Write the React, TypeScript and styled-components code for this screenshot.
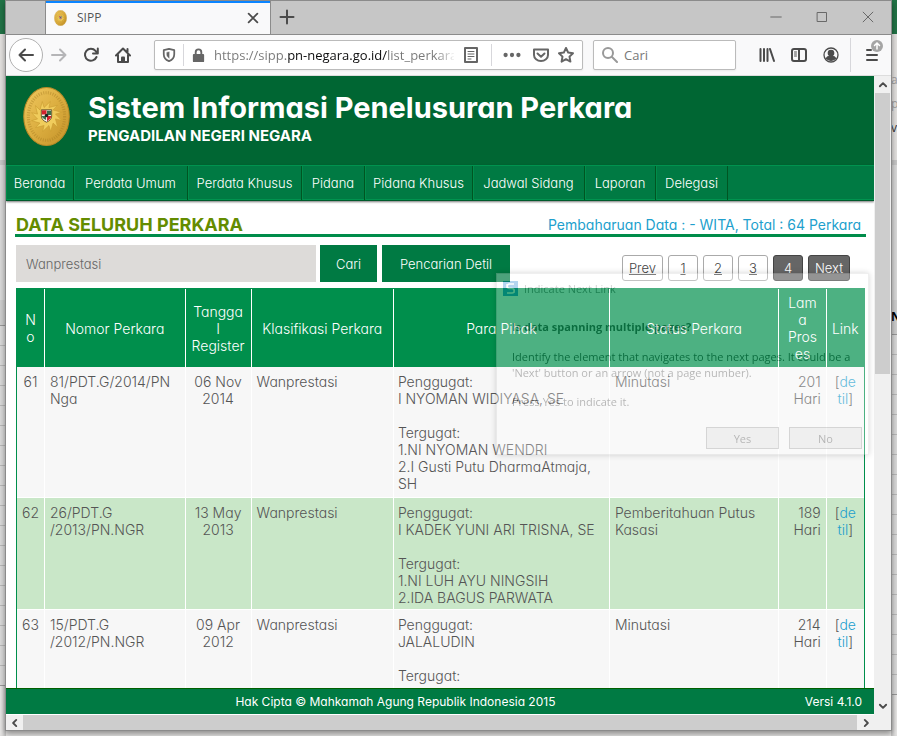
import React from "react";
import styled, { createGlobalStyle } from "styled-components";

const GlobalStyle = createGlobalStyle`
  * { box-sizing: border-box; }
  body { margin: 0; background: #e6e6e6; }
  button, input { font-family: inherit; font-weight: inherit; margin: 0; border: 0; padding: 0; }
`;

const gothic = `Inter, "Liberation Sans", sans-serif`;
const system = `"Open Sans", "Noto Sans", sans-serif`;

const Desktop = styled.div`
  display: grid;
  grid-template: 100vh / 100%;
  overflow: hidden;
`;

/* Spreadsheet window behind the browser */
const Backdrop = styled.div`
  grid-area: 1 / 1;
  display: flex;
  justify-content: space-between;
  background: #e9e8e7;
  font-family: ${system};
`;
const Edge = styled.div<{ $side: "left" | "right" }>`
  width: 6px;
  overflow: hidden;
  display: flex;
  flex-direction: column;
  box-shadow: inset ${(p) => (p.$side === "left" ? "-4px" : "4px")} 0 4px -2px #0003;
`;
const EdgeTitle = styled.div`
  flex: 0 0 34px;
  background: #217346;
`;
const EdgeRibbon = styled.div`
  flex: 0 0 126px;
  padding-top: 34px;
  background: #e4e2e0;
  font-size: 12px;
  line-height: 24px;
  color: #a0a0a0;
`;
const EdgeDark = styled.div`
  color: #333;
`;
const EdgeFormula = styled.div`
  flex: 0 0 140px;
  border-top: 5px solid #c8c8c8;
  background: #dadada;
`;
const EdgeHeading = styled.div`
  flex: 0 0 26px;
  font: bold 12px/34px ${system};
  background: #cfcfcf;
  border-bottom: 1px solid #999;
`;
const EdgeCells = styled.div`
  flex: 0 0 360px;
  background: repeating-linear-gradient(#dadada 0 19px, #b9b9b9 19px 20px);
  border-bottom: 1px solid #999;
`;

const Browser = styled.div`
  grid-area: 1 / 1;
  position: relative;
  margin: 0 5px 5px;
  border: 1px solid #8b8b8b;
  display: flex;
  flex-direction: column;
  min-width: 0;
  min-height: 0;
  background: #fff;
  box-shadow: 0 3px 6px #0006;
  font-family: ${system};
`;

const TabStrip = styled.div`
  flex: 0 0 33px;
  display: flex;
  background: #c6c6c6;
  border-bottom: 1px solid #8b8b8b;
`;
const Tab = styled.div`
  width: 226px;
  height: 33px;
  margin-left: 39px;
  padding: 0 10px 0 8px;
  display: flex;
  align-items: center;
  gap: 10px;
  background: #f9f9fa;
  border: solid #8b8b8b;
  border-width: 0 1px;
  box-shadow: inset 0 2px #0a84ff;
  font-size: 12px;
  color: #555;
`;
const TabLabel = styled.span`
  flex: 1;
`;
const IconButton = styled.button<{ $w?: number; $h?: number; $tone?: string }>`
  flex: 0 0 ${(p) => p.$w ?? 32}px;
  height: ${(p) => p.$h ?? 32}px;
  display: flex;
  align-items: center;
  justify-content: center;
  background: none;
  color: ${(p) => p.$tone ?? "#4b4b4b"};
`;
const WindowButtons = styled.div`
  display: flex;
  margin-left: auto;
`;

const Toolbar = styled.div`
  flex: 0 0 41px;
  height: 41px;
  display: flex;
  align-items: center;
  padding: 0 0 1px 3px;
  background: #f9f9fa;
  box-shadow: inset 0 -1px #ddd;
`;
const BackButton = styled(IconButton)`
  border: 1px solid #b1b1b1;
  border-radius: 50%;
  background: #fff;
`;
const Field = styled.div`
  height: 30px;
  display: flex;
  align-items: center;
  background: #fff;
  border: 1px solid #bbb;
  border-radius: 2px;
  box-shadow: 0 1px 2px #0001;
`;
const UrlField = styled(Field)`
  flex: 1;
  min-width: 0;
  margin: 0 10px 0 15px;
`;
const SearchField = styled(Field)`
  flex: 0 0 143px;
  min-width: 0;
  margin-right: 15px;
  padding-left: 8px;
  gap: 6px;
`;
const Rule = styled.i<{ $h: number; $gap?: number }>`
  flex: 0 0 1px;
  height: ${(p) => p.$h}px;
  margin-left: ${(p) => p.$gap ?? 0}px;
  background: #d7d7db;
`;
const UrlInput = styled.input`
  flex: 1;
  min-width: 0;
  height: 24px;
  margin-left: 2px;
  font-size: 13px;
  color: transparent;
  background: linear-gradient(90deg, #777 73px, #0c0c0d 73px 173px, #777 173px 222px, #7770 242px);
  background-clip: text;
  -webkit-background-clip: text;
  outline: 0;
`;
const SearchInput = styled.input`
  flex: 1;
  min-width: 0;
  font-size: 13px;
  background: none;
  outline: 0;
  &::placeholder { color: #777; opacity: 1; }
`;

const View = styled.div`
  flex: 1;
  min-height: 0;
  display: flex;
`;
const ViewColumn = styled.div`
  flex: 1;
  min-width: 0;
  display: flex;
  flex-direction: column;
`;
const Page = styled.div`
  flex: 1;
  min-height: 0;
  overflow: hidden;
  font-family: ${gothic};
  font-feature-settings: "cv11";
  font-size: 13px;
  font-weight: 300;
  color: #555;
`;
const VBar = styled.div`
  flex: 0 0 17px;
  display: flex;
  flex-direction: column;
  align-items: center;
  padding-bottom: 16px;
  background: #f0f0f0;
`;
const VThumb = styled.div`
  flex: 0 0 44%;
  width: 15px;
  background: #cdcdcd;
`;
const Spacer = styled.div`
  flex: 1;
`;
const HBar = styled.div`
  flex: 0 0 16px;
  display: flex;
  align-items: center;
  background: #f0f0f0;
  border-top: 1px solid #fff;
`;
const HThumb = styled.div`
  flex: 1;
  height: 15px;
  background: #cdcdcd;
`;

const Banner = styled.header`
  height: 89px;
  display: flex;
  gap: 18px;
  padding: 11px 17px;
  background: #006633;
  color: #fff;
`;
const SiteName = styled.h1`
  margin: 4px 0 0;
  font-size: 29px;
  line-height: 34px;
  font-weight: 700;
  white-space: nowrap;
`;
const CourtName = styled.h2`
  margin: 2px 0 0;
  font-size: 15px;
  line-height: 18px;
  font-weight: 700;
`;
const Menu = styled.nav`
  height: 36px;
  display: flex;
  background: #007a43;
  border-top: 1px solid #00934f;
  border-bottom: 1px solid #005a2c;
  box-shadow: inset 0 -1px #00934f, 0 1px 2px #0008;
`;
const MenuLink = styled.a<{ $w: number }>`
  flex: 0 0 ${(p) => p.$w}px;
  display: flex;
  align-items: center;
  justify-content: center;
  color: #fff;
  text-decoration: none;
  white-space: nowrap;
  border-right: 1px solid #005522;
  box-shadow: inset 1px 0 #008c4b;
`;
const Main = styled.main`
  padding: 9px 8px 0 9px;
`;
const Heading = styled.div`
  height: 27px;
  display: flex;
  justify-content: space-between;
  align-items: flex-end;
  padding: 0 5px 0 1px;
  border-bottom: 3px solid #008c4a;
  line-height: 18px;
`;
const Title = styled.h3`
  margin: 0;
  font-size: 18px;
  line-height: 18px;
  font-weight: 700;
  color: #648c00;
`;
const Updated = styled.span`
  font-size: 14px;
  font-weight: 400;
  color: #219fcd;
`;
const Filters = styled.form`
  display: flex;
  align-items: flex-start;
  padding: 8px 16px 6px 1px;
`;
const Query = styled.input`
  flex: 0 1 300px;
  min-width: 0;
  height: 37px;
  padding: 0 10px;
  margin-right: 4px;
  background: #dddbd9;
  font-size: 13px;
  font-feature-settings: inherit;
  color: #666;
`;
const Submit = styled.button<{ $w: number }>`
  flex: 0 0 ${(p) => p.$w}px;
  height: 37px;
  margin-right: 5px;
  background: #007a43;
  color: #fff;
  font-size: 13px;
  font-feature-settings: inherit;
`;
const Pager = styled.div`
  display: flex;
  gap: 5px;
  margin: 10px 0 0 auto;
`;
const PageLink = styled.a<{ $w?: number; $dark?: boolean }>`
  width: ${(p) => p.$w ?? 30}px;
  height: 26px;
  display: flex;
  align-items: center;
  justify-content: center;
  border: 1px solid ${(p) => (p.$dark ? "#444" : "#aaa")};
  border-radius: 3px;
  background: ${(p) => (p.$dark ? "#666" : "#fff")};
  color: ${(p) => (p.$dark ? "#fff" : "#444")};
  text-decoration: ${(p) => (p.$dark ? "none" : "underline")};
`;

const CaseTable = styled.table`
  width: calc(100% - 2px);
  margin-left: 1px;
  table-layout: fixed;
  border-collapse: separate;
  border-spacing: 0;
  border: solid #008f4c;
  border-width: 1px 1px 0;
  font-size: 14px;
  line-height: 17px;
`;
const Th = styled.th`
  height: 78px;
  padding: 0;
  background: #008f4c;
  color: #fff;
  font-weight: inherit;
  white-space: pre-line;
  border-right: 1px solid #fff;
  &:last-child { border-right: 0; }
`;
const Row = styled.tr<{ $h: number; $alt: boolean }>`
  height: ${(p) => p.$h}px;
  background: ${(p) => (p.$alt ? "#c9e7c8" : "#f7f7f7")};
`;
const Td = styled.td<{ $align?: string; $pad?: number }>`
  padding: 6px ${(p) => p.$pad ?? 5}px 3px;
  vertical-align: top;
  text-align: ${(p) => p.$align ?? "left"};
  white-space: pre;
  border: solid #fff;
  border-width: 0 1px 1px 0;
  &:last-child { border-right: 0; }
`;
const Detail = styled.a`
  color: #219fcd;
  text-decoration: none;
`;
const Footer = styled.footer`
  flex: 0 0 26px;
  display: grid;
  grid-template-columns: 1fr auto;
  gap: 20px;
  align-items: center;
  padding-right: 12px;
  text-align: center;
  background: #007a43;
  border-top: 1px solid #006000;
  color: #fff;
  font: 12px ${gothic};
  font-feature-settings: "cv11";
`;

/* Prompt fading in over the page */
const Prompt = styled.div`
  position: absolute;
  top: 272px;
  right: 22px;
  width: 373px;
  height: 182px;
  padding: 5px 6px;
  display: flex;
  flex-direction: column;
  opacity: 0.3;
  background: #fff;
  border: 1px solid #ccc;
  box-shadow: 0 0 6px #0008;
  font-size: 11px;
  color: #222;
`;
const PromptTitle = styled.div`
  display: flex;
  gap: 6px;
  align-items: center;
  height: 18px;
  color: #666;
`;
const PromptText = styled.p<{ $gap: number }>`
  margin: ${(p) => p.$gap}px 0 0 9px;
  line-height: 16px;
  white-space: pre;
`;
const PromptActions = styled.div`
  display: flex;
  justify-content: flex-end;
  gap: 10px;
  margin-top: auto;
`;
const PromptButton = styled.button`
  width: 73px;
  height: 22px;
  background: #ddd;
  border: 1px solid #888;
  font-size: 11px;
  color: #222;
`;

const Ico = ({ children, s = 16, w = 2, fill = "none" }: { children: React.ReactNode; s?: number; w?: number; fill?: string }) => (
  <svg width={s} height={s} viewBox="0 0 16 16" fill={fill} stroke="currentColor" strokeWidth={w} strokeLinecap="round" strokeLinejoin="round">
    {children}
  </svg>
);

const rays = Array.from({ length: 24 }, (_, i) => {
  const a = (i * Math.PI) / 12;
  const r = i % 2 ? 9 : 15;
  return `${22.5 + r * Math.sin(a + (i % 2 ? 0 : 0.25))},${28.5 - r * Math.cos(a + (i % 2 ? 0 : 0.25))}`;
}).join(" ");

const Seal = ({ w, h }: { w: number; h: number }) => (
  <svg width={w} height={h} viewBox="0 0 45 57">
    <defs>
      <linearGradient id="gold" x1="0" y1="0" x2="1" y2="1">
        <stop offset="0" stopColor="#f0c860" />
        <stop offset="0.5" stopColor="#dcae40" />
        <stop offset="1" stopColor="#c39128" />
      </linearGradient>
    </defs>
    <ellipse cx="22.5" cy="28.5" rx="22" ry="28" fill="url(#gold)" stroke="#b98a26" />
    <ellipse cx="22.5" cy="28.5" rx="17.5" ry="23" fill="none" stroke="#a67c22" strokeWidth="3" strokeDasharray="1 1.3" opacity="0.45" />
    <polygon points={rays} fill="#f0cc5c" stroke="#c99c30" strokeWidth="0.6" />
    <path d="M17.500 22h10v6q0 4-5 6-5-2-5-6z" fill="#f4f0e4" stroke="#5a4517" strokeWidth="0.8" />
    <path d="M18 22.500h4.500v4H18zM23 28h4q0 3-4 5z" fill="#d3222c" />
    <path d="M23 23h4v4h-4zM18 28h4v4q-4-2-4-4z" fill="#3d6e4a" />
    <circle cx="22.500" cy="27.500" r="1.700" fill="#222" />
  </svg>
);

const menu: [string, number][] = [
  ["Beranda", 68], ["Perdata Umum", 114], ["Perdata Khusus", 114], ["Pidana", 63],
  ["Pidana Khusus", 108], ["Jadwal Sidang", 112], ["Laporan", 71], ["Delegasi", 72],
];
const columns: [string, string][] = [
  ["N\no", "3.3%"], ["Nomor Perkara", "16.6%"], ["Tangga\nl\nRegister", "7.8%"], ["Klasifikasi Perkara", "16.8%"],
  ["Para Pihak", "25.5%"], ["Status Perkara", "20%"], ["Lam\na\nPros\nes", "5.6%"], ["Link", "4.4%"],
];
const cases = [
  { no: "61", id: "81/PDT.G/2014/PN\nNga", date: "06 Nov\n2014", status: "Minutasi", days: "201\nHari", h: 131,
    parties: "Penggugat:\nI NYOMAN WIDIYASA, SE\n\nTergugat:\n1.NI NYOMAN WENDRI\n2.I Gusti Putu DharmaAtmaja,\nSH" },
  { no: "62", id: "26/PDT.G\n/2013/PN.NGR", date: "13 May\n2013", status: "Pemberitahuan Putus\nKasasi", days: "189\nHari", h: 112,
    parties: "Penggugat:\nI KADEK YUNI ARI TRISNA, SE\n\nTergugat:\n1.NI LUH AYU NINGSIH\n2.IDA BAGUS PARWATA" },
  { no: "63", id: "15/PDT.G\n/2012/PN.NGR", date: "09 Apr\n2012", status: "Minutasi", days: "214\nHari", h: 113,
    parties: "Penggugat:\nJALALUDIN\n\nTergugat:" },
];

export default function App() {
  return (
    <Desktop>
      <GlobalStyle />
      <Backdrop>
        <Edge $side="left">
          <EdgeTitle /><EdgeRibbon /><EdgeFormula /><EdgeHeading /><EdgeCells />
        </Edge>
        <Edge $side="right">
          <EdgeTitle />
          <EdgeRibbon>a<br />p<EdgeDark>va</EdgeDark></EdgeRibbon>
          <EdgeFormula />
          <EdgeHeading>N</EdgeHeading>
          <EdgeCells />
        </Edge>
      </Backdrop>
      <Browser>
        <TabStrip>
          <Tab>
            <Seal w={13} h={16} />
            <TabLabel>SIPP</TabLabel>
            <IconButton $w={14} aria-label="Close tab"><Ico s={14}><path d="M3 3l10 10M13 3L3 13" /></Ico></IconButton>
          </Tab>
          <IconButton aria-label="New tab"><Ico><path d="M8 1.500v13M1.500 8h13" /></Ico></IconButton>
          <WindowButtons>
            <IconButton $w={46} $tone="#666" aria-label="Minimize"><Ico s={12} w={1.3}><path d="M1 8h14" /></Ico></IconButton>
            <IconButton $w={46} $tone="#666" aria-label="Maximize"><Ico s={12} w={1.3}><path d="M2 2h12v12H2z" /></Ico></IconButton>
            <IconButton $w={46} $tone="#666" aria-label="Close window"><Ico s={12} w={1.3}><path d="M1.500 1.500l13 13M14.500 1.500l-13 13" /></Ico></IconButton>
          </WindowButtons>
        </TabStrip>
        <Toolbar>
          <BackButton $w={34} $h={34} aria-label="Back"><Ico><path d="M15 8H1.500M7 2.500L1.500 8 7 13.500" /></Ico></BackButton>
          <IconButton $tone="#b5b5b7" aria-label="Forward"><Ico><path d="M1 8h13.500M9 2.500L14.500 8 9 13.500" /></Ico></IconButton>
          <IconButton aria-label="Reload"><Ico><path d="M13.500 10a6 6 0 1 1-1-6.200L14.500 6M14.800 1.500V6.500H10" /></Ico></IconButton>
          <IconButton aria-label="Home"><Ico><path d="M1 8.500L8 1.500l7 7M3 8v7h10V8M12.500 2v3" /><path d="M7 10.500h2V15H7z" /></Ico></IconButton>
          <UrlField>
            <IconButton $w={28} $h={28} $tone="#666" aria-label="Protections"><Ico s={14}><path d="M8 1l6 1.500V7c0 4-2.500 6.500-6 8-3.500-1.500-6-4-6-8V2.500z" /><path d="M8 4.500L5.500 5v2.500c0 2 1 3 2.500 4z" fill="currentColor" strokeWidth="0.500" /></Ico></IconButton>
            <Rule $h={22} />
            <IconButton $w={28} $h={28} $tone="#666" aria-label="Site information"><Ico s={15}><path d="M5 7V4.500a3 3 0 0 1 6 0V7" /><path d="M3 7.500h10v6.500H3z" fill="currentColor" /></Ico></IconButton>
            <UrlInput aria-label="Address" defaultValue="https://sipp.pn-negara.go.id/list_perkara/search" />
            <IconButton $w={34} $h={28} $tone="#666" aria-label="Reader view"><Ico><path d="M2 1h12v14H2z" /><path d="M5 4.500h6M5 7h6M5 9.500h6M5 12h3" strokeWidth="1" /></Ico></IconButton>
            <Rule $h={22} $gap={3} />
            <IconButton $w={40} $h={28} $tone="#666" aria-label="Page actions"><Ico s={18} w={0} fill="currentColor"><circle cx="2.300" cy="8" r="1.900" /><circle cx="8" cy="8" r="1.900" /><circle cx="13.700" cy="8" r="1.900" /></Ico></IconButton>
            <IconButton $w={18} $h={28} $tone="#666" aria-label="Save to Pocket"><Ico><path d="M1 2.500h14V8a7 6 0 0 1-14 0z" /><path d="M4.500 6.500L8 9.700l3.500-3.200" /></Ico></IconButton>
            <IconButton $w={32} $h={28} $tone="#666" aria-label="Bookmark"><Ico><path d="M8 1l2.200 4.600 4.800.6-3.500 3.400.9 5L8 12.200l-4.400 2.400.9-5L1 6.200l4.800-.6z" /></Ico></IconButton>
          </UrlField>
          <SearchField>
            <Ico><g stroke="#999"><circle cx="6" cy="6" r="5" /><path d="M10 10l5 5" /></g></Ico>
            <SearchInput aria-label="Search" placeholder="Cari" />
          </SearchField>
          <IconButton aria-label="Library"><Ico><path d="M1.500 2v12M5 2v12M8.500 2v12M11 2l4 12" /></Ico></IconButton>
          <IconButton aria-label="Sidebars"><Ico><rect x="1" y="2" width="14" height="12" rx="2" /><path d="M8 2v12" /><path d="M3.500 5h2M3.500 7h2M3.500 9h2" strokeWidth="1" /></Ico></IconButton>
          <IconButton aria-label="Account"><Ico w={1.3}><circle cx="8" cy="8" r="7" /><circle cx="8" cy="6" r="2.700" fill="currentColor" /><path d="M3.500 11.500c.5-2 2-2 4.500-2s4 0 4.500 2Q8 15 3.500 11.500z" fill="currentColor" /></Ico></IconButton>
          <Rule $h={34} $gap={3} />
          <IconButton $w={40} $h={40} aria-label="Menu">
            <svg width="24" height="34" viewBox="-3 1 24 34" fill="none" stroke="#4b4b4b" strokeWidth="2" strokeLinecap="round">
              <path d="M5 13h4M5 18h10M5 23h10" />
              <circle cx="15" cy="9" r="6" fill="#a5a5a5" stroke="none" />
              <path d="M15 12V6.500M12.500 8.500L15 6l2.500 2.500" stroke="#fff" strokeWidth="1.500" />
            </svg>
          </IconButton>
        </Toolbar>
        <View>
          <ViewColumn>
            <Page>
              <Banner>
                <Seal w={47} h={59} />
                <div>
                  <SiteName>Sistem Informasi Penelusuran Perkara</SiteName>
                  <CourtName>PENGADILAN NEGERI NEGARA</CourtName>
                </div>
              </Banner>
              <Menu>{menu.map(([t, w]) => <MenuLink key={t} href="#" $w={w}>{t}</MenuLink>)}</Menu>
              <Main>
                <Heading>
                  <Title>DATA SELURUH PERKARA</Title>
                  <Updated>Pembaharuan Data : - WITA, Total : 64 Perkara</Updated>
                </Heading>
                <Filters onSubmit={(e) => e.preventDefault()}>
                  <Query aria-label="Kata kunci" defaultValue="Wanprestasi" />
                  <Submit $w={57}>Cari</Submit>
                  <Submit $w={128} type="button">Pencarian Detil</Submit>
                  <Pager>
                    <PageLink href="#" $w={41}>Prev</PageLink>
                    <PageLink href="#">1</PageLink>
                    <PageLink href="#">2</PageLink>
                    <PageLink href="#">3</PageLink>
                    <PageLink href="#" $dark aria-current="page">4</PageLink>
                    <PageLink href="#" $dark $w={42}>Next</PageLink>
                  </Pager>
                </Filters>
                <CaseTable>
                  <colgroup>{columns.map(([t, w]) => <col key={t} width={w} />)}</colgroup>
                  <thead><tr>{columns.map(([t]) => <Th key={t} scope="col">{t}</Th>)}</tr></thead>
                  <tbody>
                    {cases.map((c, i) => (
                      <Row key={c.no} $h={c.h} $alt={i % 2 === 1}>
                        <Td $align="center">{c.no}</Td>
                        <Td>{c.id}</Td>
                        <Td $align="center">{c.date}</Td>
                        <Td>Wanprestasi</Td>
                        <Td $pad={4}>{c.parties}</Td>
                        <Td>{c.status}</Td>
                        <Td $align="right">{c.days}</Td>
                        <Td $align="center">[<Detail href="#">{"de\ntil"}</Detail>]</Td>
                      </Row>
                    ))}
                  </tbody>
                </CaseTable>
              </Main>
            </Page>
            <Footer>
              <span>Hak Cipta © Mahkamah Agung Republik Indonesia 2015</span>
              <span>Versi 4.1.0</span>
            </Footer>
            <HBar>
              <IconButton $w={17} $h={15} aria-label="Scroll left"><Ico s={10} w={3}><path d="M10 3L5 8l5 5" /></Ico></IconButton>
              <HThumb />
              <IconButton $w={17} $h={15} aria-label="Scroll right"><Ico s={10} w={3}><path d="M6 3l5 5-5 5" /></Ico></IconButton>
            </HBar>
          </ViewColumn>
          <VBar>
            <IconButton $w={17} $h={17} aria-label="Scroll up"><Ico s={10} w={3}><path d="M3 10l5-5 5 5" /></Ico></IconButton>
            <VThumb />
            <Spacer />
            <IconButton $w={17} $h={17} aria-label="Scroll down"><Ico s={10} w={3}><path d="M3 6l5 5 5-5" /></Ico></IconButton>
          </VBar>
        </View>
        <Prompt role="dialog" aria-label="Indicate Next Link">
          <PromptTitle>
            <svg width="15" height="15" viewBox="0 0 15 15"><rect width="15" height="15" fill="#0a78d0" /><path d="M11 3H6.500a2 2 0 0 0 0 4.500H9A2 2 0 0 1 9 12H4M4 3v4M11 8v4" fill="none" stroke="#fff" strokeWidth="1.500" /></svg>
            Indicate Next Link
          </PromptTitle>
          <PromptText $gap={22}><b>Is data spanning multiple pages?</b></PromptText>
          <PromptText $gap={14}>{"Identify the element that navigates to the next pages. It could be a\n'Next' button or an arrow (not a page number)."}</PromptText>
          <PromptText $gap={13}>Press Yes to indicate it.</PromptText>
          <PromptActions><PromptButton>Yes</PromptButton><PromptButton>No</PromptButton></PromptActions>
        </Prompt>
      </Browser>
    </Desktop>
  );
}
